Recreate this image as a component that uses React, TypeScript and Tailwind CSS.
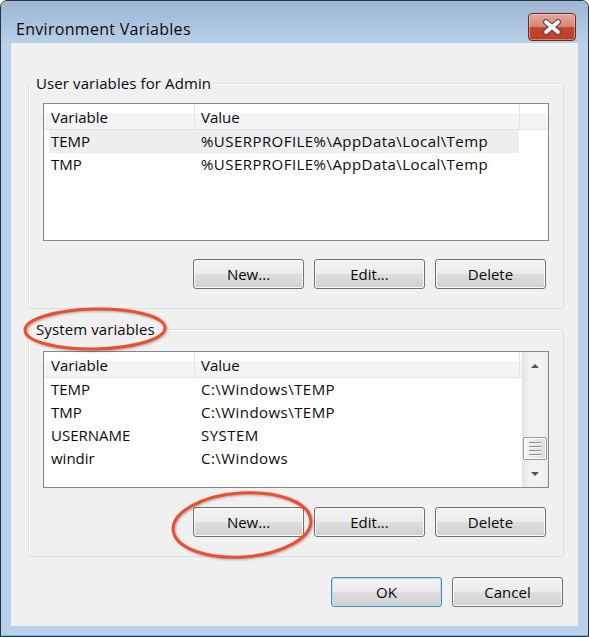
const userRows = [
  { name: "TEMP", value: "%USERPROFILE%\\AppData\\Local\\Temp" },
  { name: "TMP", value: "%USERPROFILE%\\AppData\\Local\\Temp" },
];

const systemRows = [
  { name: "TEMP", value: "C:\\Windows\\TEMP" },
  { name: "TMP", value: "C:\\Windows\\TEMP" },
  { name: "USERNAME", value: "SYSTEM" },
  { name: "windir", value: "C:\\Windows" },
];

const Button = ({ label, primary }: { label: string; primary?: boolean }) => {
  return primary ? (
    <button className="h-[30px] w-[111px] rounded-[3px] border border-[#3d8ec4] bg-[linear-gradient(#f3f3f3_0%,#ebebeb_50%,#dedede_50%,#d0d0d0_100%)] text-[#0a0a0a] shadow-[inset_0_0_0_1px_#b5e1f7]">
      {label}
    </button>
  ) : (
    <button className="h-[30px] w-[111px] rounded-[3px] border border-[#707070] bg-[linear-gradient(#f3f3f3_0%,#ebebeb_50%,#dedede_50%,#d0d0d0_100%)] text-[#0a0a0a] shadow-[inset_0_0_0_1px_#fbfbfb]">
      {label}
    </button>
  );
};

const Arrow = ({ down }: { down?: boolean }) => (
  <svg width="10" height="6" viewBox="0 0 10 6">
    {down ? (
      <polygon points="1,1 9,1 5,5" fill="#555" />
    ) : (
      <polygon points="1,5 9,5 5,1" fill="#555" />
    )}
  </svg>
);

const Scrollbar = () => (
  <div className="flex w-[26px] flex-col bg-[linear-gradient(to_right,#e3e3e3,#f0f0f0_25%,#f3f3f3_75%,#eaeaea)]">
    <div className="flex h-[28px] items-center justify-center">
      <Arrow />
    </div>
    <div className="flex-1" />
    <div className="mx-[1px] flex h-[23px] flex-col items-center justify-center gap-[2px] rounded-[2px] border border-[#979797] bg-[linear-gradient(to_right,#f6f6f6,#e9e9e9_50%,#d9d9d9)] shadow-[inset_0_0_0_1px_#ffffff]">
      <div className="h-[2px] w-[12px] border-b border-[#f8f8f8] bg-[#8a8a8a]" />
      <div className="h-[2px] w-[12px] border-b border-[#f8f8f8] bg-[#8a8a8a]" />
      <div className="h-[2px] w-[12px] border-b border-[#f8f8f8] bg-[#8a8a8a]" />
      <div className="h-[2px] w-[12px] border-b border-[#f8f8f8] bg-[#8a8a8a]" />
    </div>
    <div className="flex h-[27px] items-center justify-center">
      <Arrow down />
    </div>
  </div>
);

const ListView = ({
  rows,
  scroll,
  tall,
}: {
  rows: { name: string; value: string }[];
  scroll?: boolean;
  tall?: boolean;
}) => (
  <div className={tall ? "flex h-[138px] border border-[#828790] bg-white" : "flex h-[137px] border border-[#828790] bg-white"}>
    <div className="min-w-0 flex-1">
      <div className="flex h-[26px] border-b border-[#e3e4e6] bg-[linear-gradient(#ffffff_0%,#ffffff_38%,#f3f4f6_38%,#f3f4f6_100%)]">
        <div className="w-[151px] border-r border-[#e3e4e6] pl-[7px] pt-[2px] leading-[22px]">Variable</div>
        <div className="w-[325px] border-r border-[#e3e4e6] pl-[6px] pt-[2px] leading-[22px]">Value</div>
        <div className="flex-1" />
      </div>
      {rows.map((r, i) => (
        <div
          key={r.name}
          className={i === 0 && !scroll ? "ml-[5px] flex h-[23px] w-[470px] bg-[#eeeeee] leading-[23px]" : "ml-[5px] flex h-[23px] w-[470px] leading-[23px]"}
        >
          <div className="w-[146px] pl-[2px]">{r.name}</div>
          <div className="whitespace-nowrap pl-[6px] tracking-[0.45px]">{r.value}</div>
        </div>
      ))}
    </div>
    {scroll && <Scrollbar />}
  </div>
);

const Group = ({
  title,
  rows,
  scroll,
}: {
  title: string;
  rows: { name: string; value: string }[];
  scroll?: boolean;
}) => (
  <div
    className={
      scroll
        ? "relative rounded-[3px] border border-[#d5dfe5] px-[14px] pb-[19px] pt-[21px] shadow-[inset_1px_1px_0_#ffffff]"
        : "relative rounded-[3px] border border-[#d5dfe5] px-[14px] pb-[19px] pt-[19px] shadow-[inset_1px_1px_0_#ffffff]"
    }
  >
    <span className="absolute -top-[13px] left-[5px] bg-[#f0f0f0] px-[2px] leading-[24px] tracking-[0.1px]">{title}</span>
    <ListView rows={rows} scroll={scroll} tall={!scroll} />
    <div className={scroll ? "mt-[19px] flex justify-end gap-[10px] pr-[3px]" : "mt-[18px] flex justify-end gap-[10px] pr-[3px]"}>
      <Button label="New..." />
      <Button label="Edit..." />
      <Button label="Delete" />
    </div>
  </div>
);

export default function App() {
  return (
    <div className="relative h-[637px] w-[589px] overflow-hidden bg-white font-['Open_Sans',sans-serif] text-[15px] text-[#0a0a0a]">
      <div className="flex h-full flex-col rounded-t-[7px] border border-[#26333f] bg-[#b9d1ea] shadow-[inset_0_-1px_0_#5ec7ea]">
        <div className="flex h-[42px] shrink-0 items-start justify-between rounded-t-[6px] bg-[linear-gradient(#9db6d1,#b8cfe8)]">
          <div className="mt-[16px] pl-[15px] text-[16px] leading-[24px] tracking-[0.3px] text-[#0a0a0a]">Environment Variables</div>
          <div className="mr-[12px] mt-[12px] flex h-[28px] w-[48px] items-center justify-center rounded-[4px] border border-[#6b2a21] bg-[linear-gradient(#e3a89c_0%,#d88676_48%,#c4462f_52%,#b93d28_100%)] shadow-[inset_0_0_0_1px_rgba(255,220,210,0.45)]">
            <svg width="20" height="16" viewBox="0 0 20 16">
              <path d="M4 3 L16 13 M16 3 L4 13" stroke="#5a4a48" strokeWidth="6" strokeLinecap="round" />
              <path d="M4 3 L16 13 M16 3 L4 13" stroke="#ffffff" strokeWidth="3.6" strokeLinecap="round" />
            </svg>
          </div>
        </div>
        <div className="ml-[10px] mr-[10px] flex h-[583px] shrink-0 flex-col bg-[#f0f0f0] pl-[17px] pr-[14px] pt-[40px]">
          <Group title="User variables for Admin" rows={userRows} />
          <div className="mt-[20px]">
            <Group title="System variables" rows={systemRows} scroll />
          </div>
          <div className="mt-[20px] flex justify-end gap-[10px] pr-[1px]">
            <Button label="OK" primary />
            <Button label="Cancel" />
          </div>
        </div>
      </div>
      <svg
        className="pointer-events-none absolute left-0 top-0 drop-shadow-[1px_1px_1px_rgba(0,0,0,0.3)]"
        width="589"
        height="637"
        viewBox="0 0 589 637"
      >
        <ellipse cx="95" cy="329" rx="70" ry="20" transform="rotate(-1 95 329)" fill="none" stroke="#ee4e2a" strokeWidth="3" />
        <ellipse cx="242" cy="525" rx="69" ry="32" transform="rotate(-4 242 525)" fill="none" stroke="#ee4e2a" strokeWidth="3" />
      </svg>
    </div>
  );
}
